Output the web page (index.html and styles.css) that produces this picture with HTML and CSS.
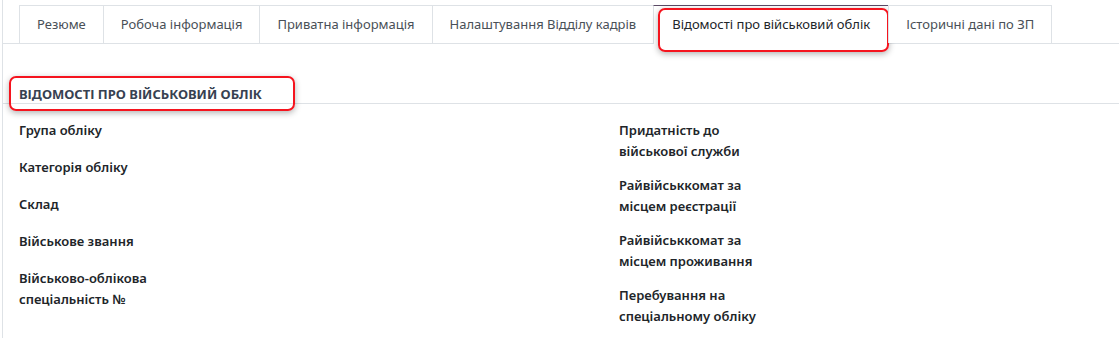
FILE: index.html
```html
<!DOCTYPE html>
<html lang="uk">
  <head>
    <meta charset="UTF-8" />
    <meta name="viewport" content="width=device-width, initial-scale=1.0" />
    <title>Відомості про військовий облік</title>
    <link rel="stylesheet" href="styles.css">
  </head>
  <body>
    <div class="sheet">
      <ul class="tabs">
        <li class="tab">Резюме</li>
        <li class="tab">Робоча інформація</li>
        <li class="tab">Приватна інформація</li>
        <li class="tab">Налаштування Відділу кадрів</li>
        <li class="tab active">Відомості про військовий облік</li>
        <li class="tab">Історичні дані по ЗП</li>
      </ul>

      <div class="group">
        <h2 class="group-title"><span class="mark">Відомості про військовий облік</span></h2>
        <div class="cols">
          <div class="col">
            <div class="row"><label>Група обліку</label></div>
            <div class="row"><label>Категорія обліку</label></div>
            <div class="row"><label>Склад</label></div>
            <div class="row"><label>Військове звання</label></div>
            <div class="row"><label>Військово-облікова спеціальність №</label></div>
          </div>
          <div class="col">
            <div class="row"><label>Придатність до військової служби</label></div>
            <div class="row"><label>Райвійськкомат за місцем реєстрації</label></div>
            <div class="row"><label>Райвійськкомат за місцем проживання</label></div>
            <div class="row"><label>Перебування на спеціальному обліку</label></div>
          </div>
        </div>
      </div>
    </div>
  </body>
</html>
```

FILE: styles.css
```css
body {
  margin: 0;
  padding: 0;
  background: #fff;
  font-family: "Noto Sans", "Open Sans", sans-serif;
  font-size: 13px;
  color: #212529;
}
.sheet {
  margin-left: 2px;
  min-height: 100vh;
  border-left: 1px solid #dee2e6;
}
.tabs {
  display: flex;
  margin: 0;
  padding: 5px 0 0 17px;
  list-style: none;
  border-bottom: 1px solid #dee2e6;
}
.tab {
  position: relative;
  height: 37px;
  line-height: 37px;
  padding: 0 17px;
  margin-left: -1px;
  margin-bottom: -1px;
  border: 1px solid #dee2e6;
  border-bottom: none;
  color: #495057;
  white-space: nowrap;
  background: #fff;
}
.tab.active {
  color: #212529;
  border-top-color: #5b4b66;
  height: 38px;
  padding: 0 18px;
}
/* red highlight drawn over the active tab */
.tab.active::after {
  content: "";
  position: absolute;
  left: 4px;
  top: 2px;
  right: -1px;
  bottom: -8px;
  border: 2px solid #f5141e;
  border-radius: 7px;
  box-shadow: 0 2px 6px rgba(0, 0, 0, 0.3);
}
.group-title {
  margin: 30px 0 0;
  padding: 0 0 0 16px;
  height: 29px;
  border-bottom: 1px solid #dee2e6;
  font-size: 13px;
  font-weight: 700;
  text-transform: uppercase;
  color: #374151;
  line-height: 40px;
}
.mark {
  position: relative;
}
.mark::after {
  content: "";
  position: absolute;
  left: -10px;
  right: -33px;
  top: -9px;
  bottom: -8px;
  border: 2px solid #f5141e;
  border-radius: 7px;
  box-shadow: 0 2px 6px rgba(0, 0, 0, 0.3);
}
.cols {
  display: grid;
  grid-template-columns: 600px 1fr;
  padding: 16px 0 0 16px;
}
.row {
  min-height: 24px;
  margin-bottom: 13px;
}
.row label {
  display: block;
  width: 150px;
  line-height: 21px;
  font-weight: 600;
  color: #212529;
}
```
